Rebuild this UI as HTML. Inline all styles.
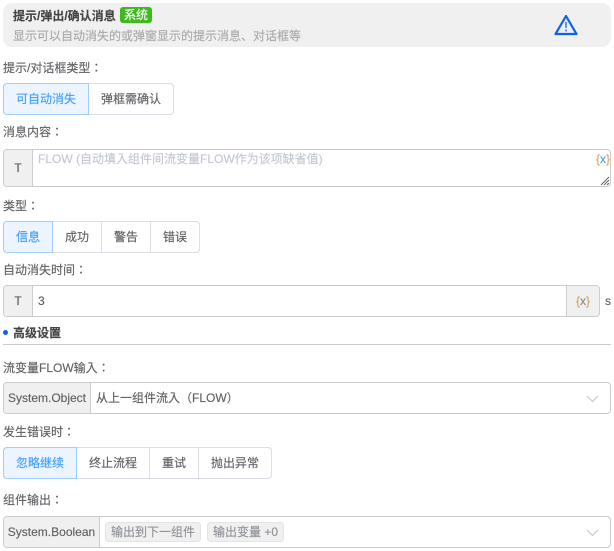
<!DOCTYPE html>
<html><head><meta charset="utf-8"><style>
html,body{margin:0;padding:0;background:#fff}
body{width:614px;height:551px;position:relative;overflow:hidden;font:12px/16px "Liberation Sans","Noto Sans CJK JP",sans-serif;color:#606266;-webkit-text-stroke:.15px}
div,span{position:absolute;box-sizing:border-box;white-space:nowrap}
.l{left:3px;height:16px}
.g{height:32px;border:1px solid #dcdfe6;border-radius:4px;background:#fff}
.b{top:-1px;height:32px;line-height:31px;text-align:center;border:1px solid #dcdfe6;border-left:0;color:#606266}
.a{background:#ecf5ff;color:#409eff;border:1px solid #a0cfff;border-radius:4px 0 0 4px;z-index:1}
.b:last-child{border-radius:0 4px 4px 0}
.i{border:1px solid #ccc;border-radius:4px;background:#fff;left:3px}
.p{left:0;top:0;bottom:0;background:#f0f0f0;border-right:1px solid #ccc;text-align:center;border-radius:3px 0 0 3px}
.x{font-size:12px}
.x b{font-weight:400;color:#d9a15e}.x i{font-style:normal;color:#5a9bd5}
.t{top:5px;height:20px;line-height:18px;background:#f0f0f0;border:1px solid #e4e4e4;border-radius:4px;color:#909399;text-align:center}
</style></head><body>
<div style="left:3px;top:3px;width:608px;height:44px;background:#f0f0f0;border-radius:9px"></div>
<div style="left:13px;top:8px;font-weight:700;color:#444">提示/弹出/确认消息</div>
<div style="left:120px;top:7px;width:32px;height:16px;background:#3fb91f;border-radius:3px;color:#fff;text-align:center;line-height:16px">系统</div>
<div style="left:13px;top:28px;color:#aaa">显示可以自动消失的或弹窗显示的提示消息、对话框等</div>
<svg style="position:absolute;left:554px;top:14px" width="24" height="22" viewBox="0 0 24 22"><path d="M12 2 L22.500 20 H1.500 Z" fill="none" stroke="#0f5ef7" stroke-width="2.200" stroke-linejoin="round"/><path d="M12 8v6M12 15.500v2" stroke="#5b93f5" stroke-width="2"/></svg>

<div class="l" style="top:60px">提示/对话框类型：</div>
<div class="g" style="left:3px;top:83px;width:171px">
<div class="b a" style="left:-1px;width:86px">可自动消失</div><div class="b" style="left:85px;width:85px">弹框需确认</div></div>

<div class="l" style="top:124px">消息内容：</div>
<div class="i" style="top:149px;width:608px;height:38px"><div class="p" style="width:29px;line-height:36px">T</div>
<div style="left:34px;top:1px;color:#c3c8d2">FLOW (自动填入组件间流变量FLOW作为该项缺省值)</div>
<div class="x" style="right:0;top:1px"><b>{</b><i>x</i><b>}</b></div>
<svg style="position:absolute;right:0;bottom:0" width="10" height="10" viewBox="0 0 10 10"><path d="M1 9 9 1M4 9 9 4M7 9 9 7" stroke="#666" stroke-width="1"/></svg></div>

<div class="l" style="top:198px">类型：</div>
<div class="g" style="left:3px;top:221px;width:197px">
<div class="b a" style="left:-1px;width:50px">信息</div><div class="b" style="left:49px;width:49px">成功</div><div class="b" style="left:98px;width:49px">警告</div><div class="b" style="left:147px;width:49px">错误</div></div>

<div class="l" style="top:262px">自动消失时间：</div>
<div class="i" style="top:285px;width:597px;height:32px"><div class="p" style="width:29px;line-height:30px">T</div>
<div style="left:34px;top:0;line-height:30px">3</div>
<div class="x" style="right:0;top:0;width:33px;height:30px;line-height:30px;background:#f0f0f0;border-left:1px solid #ccc;text-align:center;border-radius:0 3px 3px 0"><b>{</b><i style="color:#888">x</i><b>}</b></div></div>
<div style="left:605px;top:293px">s</div>

<div style="left:3px;top:330px;width:5px;height:5px;border-radius:50%;background:#0f5ef7"></div>
<div style="left:13px;top:325px;font-weight:700;color:#444">高级设置</div>
<div style="left:3px;top:344px;width:608px;height:1px;background:#ccc"></div>

<div class="l" style="top:360px">流变量FLOW输入：</div>
<div class="i" style="top:382px;width:608px;height:32px"><div class="p" style="width:87px;line-height:31px">System.Object</div>
<div style="left:92px;top:0;line-height:31px">从上一组件流入（FLOW）</div>
<svg style="position:absolute;right:11px;top:12px" width="13" height="8" viewBox="0 0 13 8"><path d="M1 1l5.500 5.500L12 1" fill="none" stroke="#c0c4cc"/></svg></div>

<div class="l" style="top:424px">发生错误时：</div>
<div class="g" style="left:3px;top:447px;width:269px">
<div class="b a" style="left:-1px;width:74px">忽略继续</div><div class="b" style="left:73px;width:73px">终止流程</div><div class="b" style="left:146px;width:49px">重试</div><div class="b" style="left:195px;width:73px">抛出异常</div></div>

<div class="l" style="top:492px">组件输出：</div>
<div class="i" style="top:516px;width:608px;height:32px"><div class="p" style="width:96px;line-height:31px">System.Boolean</div>
<div class="t" style="left:101px;width:96px">输出到下一组件</div><div class="t" style="left:203px;width:77px">输出变量 +0</div>
<svg style="position:absolute;right:11px;top:12px" width="13" height="8" viewBox="0 0 13 8"><path d="M1 1l5.500 5.500L12 1" fill="none" stroke="#c0c4cc"/></svg></div>
</body></html>
